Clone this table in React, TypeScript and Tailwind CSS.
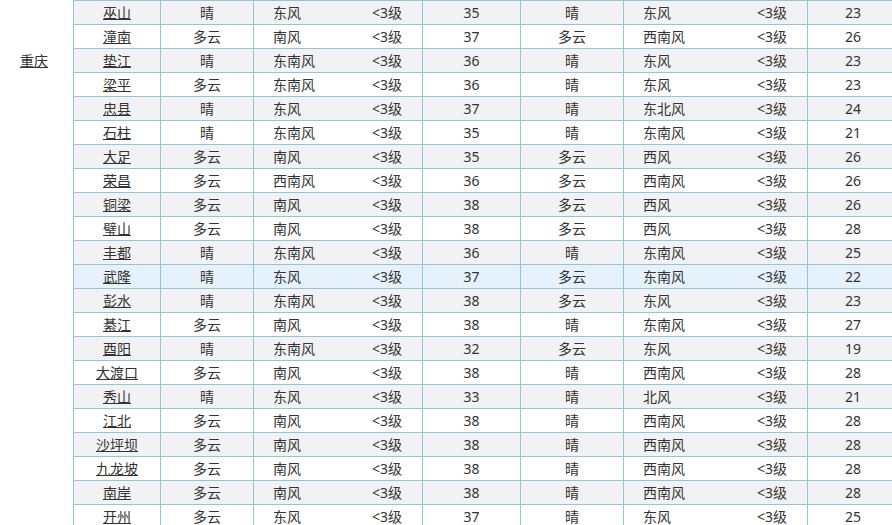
import React from "react";

type Row = [string, string, string, string, string, string, string, string, string];

const rows: Row[] = [
  ["巫山", "晴", "东风", "<3级", "35", "晴", "东风", "<3级", "23"],
  ["潼南", "多云", "南风", "<3级", "37", "多云", "西南风", "<3级", "26"],
  ["垫江", "晴", "东南风", "<3级", "36", "晴", "东风", "<3级", "23"],
  ["梁平", "多云", "东南风", "<3级", "36", "晴", "东风", "<3级", "23"],
  ["忠县", "晴", "东风", "<3级", "37", "晴", "东北风", "<3级", "24"],
  ["石柱", "晴", "东南风", "<3级", "35", "晴", "东南风", "<3级", "21"],
  ["大足", "多云", "南风", "<3级", "35", "多云", "西风", "<3级", "26"],
  ["荣昌", "多云", "西南风", "<3级", "36", "多云", "西南风", "<3级", "26"],
  ["铜梁", "多云", "南风", "<3级", "38", "多云", "西风", "<3级", "26"],
  ["璧山", "多云", "南风", "<3级", "38", "多云", "西风", "<3级", "28"],
  ["丰都", "晴", "东南风", "<3级", "36", "晴", "东南风", "<3级", "25"],
  ["武隆", "晴", "东风", "<3级", "37", "多云", "东南风", "<3级", "22"],
  ["彭水", "晴", "东南风", "<3级", "38", "多云", "东风", "<3级", "23"],
  ["綦江", "多云", "南风", "<3级", "38", "晴", "东南风", "<3级", "27"],
  ["酉阳", "晴", "东南风", "<3级", "32", "多云", "东风", "<3级", "19"],
  ["大渡口", "多云", "南风", "<3级", "38", "晴", "西南风", "<3级", "28"],
  ["秀山", "晴", "东风", "<3级", "33", "晴", "北风", "<3级", "21"],
  ["江北", "多云", "南风", "<3级", "38", "晴", "西南风", "<3级", "28"],
  ["沙坪坝", "多云", "南风", "<3级", "38", "晴", "西南风", "<3级", "28"],
  ["九龙坡", "多云", "南风", "<3级", "38", "晴", "西南风", "<3级", "28"],
  ["南岸", "多云", "南风", "<3级", "38", "晴", "西南风", "<3级", "28"],
  ["开州", "多云", "东风", "<3级", "37", "晴", "东风", "<3级", "25"],
];

export default function App() {
  return (
    <div
      className="w-[892px] h-[525px] overflow-hidden bg-white text-[14px] text-[#333]"
      style={{ fontFamily: '"Noto Sans", "Noto Sans CJK SC", sans-serif' }}
    >
      <div className="w-[900px]">
        {rows.map((r, i) => {
          const bg = i === 11 ? "bg-[#e6f2fb]" : i % 2 === 0 ? "bg-[#f2f2f4]" : "bg-white";
          const first = i === 0;
          return (
            <div key={i} className={`flex ${first ? "h-[25px]" : "h-[24px]"}`}>
              <div
                className={`w-[73px] shrink-0 bg-white flex items-center justify-center pr-[5px] ${
                  first ? "pt-[1px]" : ""
                }`}
              >
                {i === 2 ? <a className="underline text-[#333] leading-none">重庆</a> : null}
              </div>
              <div
                className={`flex flex-1 ${bg} border-l border-b border-[#92c4da] ${
                  first ? "border-t" : ""
                }`}
              >
                <div className="w-[86px] shrink-0 flex items-center justify-center">
                  <a className="underline text-[#333] leading-none">{r[0]}</a>
                </div>
                <div className="w-[93px] shrink-0 border-l border-[#92c4da] flex items-center justify-center">
                  {r[1]}
                </div>
                <div className="w-[169px] shrink-0 border-l border-[#92c4da] flex items-center justify-between pl-[19px] pr-[20px]">
                  <span>{r[2]}</span>
                  <span>{r[3]}</span>
                </div>
                <div className="w-[98px] shrink-0 border-l border-[#92c4da] flex items-center justify-center">
                  {r[4]}
                </div>
                <div className="w-[103px] shrink-0 border-l border-[#92c4da] flex items-center justify-center">
                  {r[5]}
                </div>
                <div className="w-[184px] shrink-0 border-l border-[#92c4da] flex items-center justify-between pl-[19px] pr-[20px]">
                  <span>{r[6]}</span>
                  <span>{r[7]}</span>
                </div>
                <div className="w-[92px] shrink-0 border-l border-r border-[#92c4da] flex items-center justify-center">
                  {r[8]}
                </div>
              </div>
            </div>
          );
        })}
      </div>
    </div>
  );
}
